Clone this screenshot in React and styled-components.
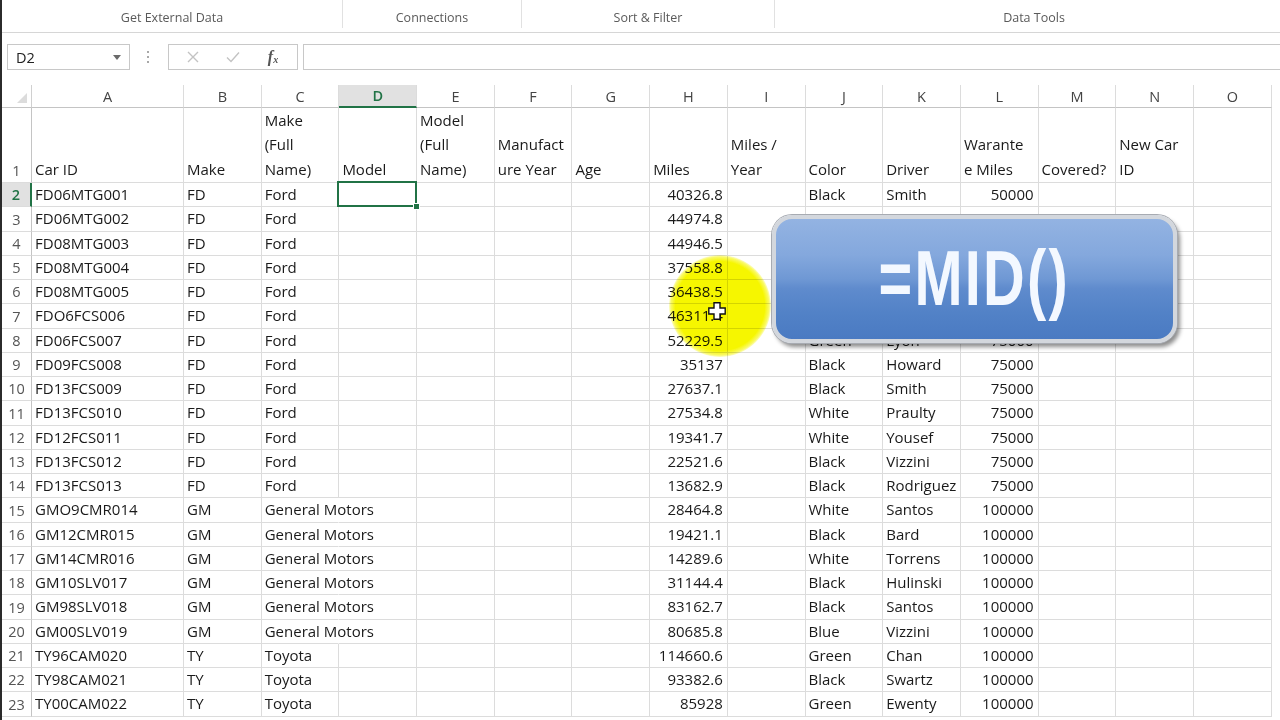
import React from 'react';
import styled, { createGlobalStyle } from 'styled-components';

const GlobalStyle = createGlobalStyle`
  html, body {
    margin: 0;
    padding: 0;
    background: #fff;
  }
  body {
    font-family: "Open Sans", "Liberation Sans", sans-serif;
    overflow: hidden;
  }
`;

const LETTERS = ['A', 'B', 'C', 'D', 'E', 'F', 'G', 'H', 'I', 'J', 'K', 'L', 'M', 'N', 'O'];

// header row: one entry per column, lines are wrapped like Excel wraps them
const TITLES = [
  ['Car ID'],
  ['Make'],
  ['Make', '(Full', 'Name)'],
  ['Model'],
  ['Model', '(Full', 'Name)'],
  ['Manufact', 'ure Year'],
  ['Age'],
  ['Miles'],
  ['Miles /', 'Year'],
  ['Color'],
  ['Driver'],
  ['Warante', 'e Miles'],
  ['Covered?'],
  ['New Car', 'ID'],
  []
];

// rows 3-7 of Color / Driver / Warantee sit under the callout, so they stay blank
const ROWS = [
  ['FD06MTG001', 'FD', 'Ford', '40326.8', 'Black', 'Smith', '50000'],
  ['FD06MTG002', 'FD', 'Ford', '44974.8', '', '', ''],
  ['FD08MTG003', 'FD', 'Ford', '44946.5', '', '', ''],
  ['FD08MTG004', 'FD', 'Ford', '37558.8', '', '', ''],
  ['FD08MTG005', 'FD', 'Ford', '36438.5', '', '', ''],
  ['FDO6FCS006', 'FD', 'Ford', '46311.4', '', '', ''],
  ['FD06FCS007', 'FD', 'Ford', '52229.5', 'Green', 'Lyon', '75000'],
  ['FD09FCS008', 'FD', 'Ford', '35137', 'Black', 'Howard', '75000'],
  ['FD13FCS009', 'FD', 'Ford', '27637.1', 'Black', 'Smith', '75000'],
  ['FD13FCS010', 'FD', 'Ford', '27534.8', 'White', 'Praulty', '75000'],
  ['FD12FCS011', 'FD', 'Ford', '19341.7', 'White', 'Yousef', '75000'],
  ['FD13FCS012', 'FD', 'Ford', '22521.6', 'Black', 'Vizzini', '75000'],
  ['FD13FCS013', 'FD', 'Ford', '13682.9', 'Black', 'Rodriguez', '75000'],
  ['GMO9CMR014', 'GM', 'General Motors', '28464.8', 'White', 'Santos', '100000'],
  ['GM12CMR015', 'GM', 'General Motors', '19421.1', 'Black', 'Bard', '100000'],
  ['GM14CMR016', 'GM', 'General Motors', '14289.6', 'White', 'Torrens', '100000'],
  ['GM10SLV017', 'GM', 'General Motors', '31144.4', 'Black', 'Hulinski', '100000'],
  ['GM98SLV018', 'GM', 'General Motors', '83162.7', 'Black', 'Santos', '100000'],
  ['GM00SLV019', 'GM', 'General Motors', '80685.8', 'Blue', 'Vizzini', '100000'],
  ['TY96CAM020', 'TY', 'Toyota', '114660.6', 'Green', 'Chan', '100000'],
  ['TY98CAM021', 'TY', 'Toyota', '93382.6', 'Black', 'Swartz', '100000'],
  ['TY00CAM022', 'TY', 'Toyota', '85928', 'Green', 'Ewenty', '100000']
];

const GROUPS = [
  { label: 'Get External Data', width: 341 },
  { label: 'Connections', width: 179 },
  { label: 'Sort & Filter', width: 253 },
  { label: 'Data Tools', width: 518, last: true }
];

// map a data row onto the 15 columns
const toCells = row => {
  const [id, make, full, miles, color, driver, warranty] = row;
  return [id, make, full, '', '', '', '', miles, '', color, driver, warranty, '', '', ''];
};

const NUMERIC = { 7: true, 11: true };

// long text in C runs on into the empty D column, like Excel does
const spills = (value, c) => c === 2 && value.length > 10;

function App() {
  return (
    <Window>
      <GlobalStyle />
      <Ribbon>
        {GROUPS.map(g => (
          <RibbonGroup key={g.label} $width={g.width} $last={g.last}>
            <GroupLabel>{g.label}</GroupLabel>
          </RibbonGroup>
        ))}
      </Ribbon>

      <FormulaBar>
        <NameBox>
          <span>D2</span>
          <Caret />
        </NameBox>
        <Grip>
          <i />
          <i />
          <i />
        </Grip>
        <FormulaButtons>
          <FxButton>
            <svg width="12" height="12" viewBox="0 0 12 12">
              <path d="M1 1 L11 11 M11 1 L1 11" stroke="#c3c3c3" strokeWidth="1.4" fill="none" />
            </svg>
          </FxButton>
          <FxButton>
            <svg width="14" height="12" viewBox="0 0 14 12">
              <path d="M1 6.5 L5 10.5 L13 1.5" stroke="#c3c3c3" strokeWidth="1.4" fill="none" />
            </svg>
          </FxButton>
          <FxButton>
            <FxLabel>
              f<sub>x</sub>
            </FxLabel>
          </FxButton>
        </FormulaButtons>
        <FormulaInput />
      </FormulaBar>

      <Sheet>
        <Corner />
        {LETTERS.map(l => (
          <ColHead key={l} $active={l === 'D'}>
            {l}
          </ColHead>
        ))}

        <RowNum>1</RowNum>
        {TITLES.map((lines, i) => (
          <TitleCell key={i}>
            {lines.map(line => (
              <span key={line}>{line}</span>
            ))}
          </TitleCell>
        ))}

        {ROWS.map((row, r) => (
          <React.Fragment key={row[0]}>
            <RowNum $active={r === 0}>{r + 2}</RowNum>
            {toCells(row).map((value, c) => (
              <Cell
                key={c}
                $right={NUMERIC[c]}
                $spill={spills(value, c)}
                $selected={r === 0 && c === 3}
              >
                {value}
              </Cell>
            ))}
          </React.Fragment>
        ))}
      </Sheet>

      <Highlight />
      <Pointer width="18" height="18" viewBox="0 0 18 18">
        <path
          d="M6 0.8 H12 V6 H17.2 V12 H12 V17.2 H6 V12 H0.8 V6 H6 Z"
          fill="#fff"
          stroke="#111"
          strokeWidth="1.4"
        />
      </Pointer>

      <Callout>
        <CalloutText>=MID()</CalloutText>
      </Callout>
    </Window>
  );
}

const Window = styled.div`
  position: relative;
  width: 1280px;
  height: 720px;
  overflow: hidden;
  box-sizing: border-box;
  border-left: 2px solid #2b2b2b;
  background: #fff;
`;

const Ribbon = styled.div`
  display: flex;
  height: 32px;
  border-bottom: 1px solid #d6d6d6;
  overflow: hidden;
`;

const RibbonGroup = styled.div`
  flex: 0 0 ${({ $width }) => $width}px;
  height: 28px;
  display: flex;
  align-items: flex-end;
  justify-content: center;
  border-right: ${({ $last }) => ($last ? 'none' : '1px solid #e1e1e1')};
  box-sizing: border-box;
`;

const GroupLabel = styled.span`
  font-size: 12.5px;
  line-height: 16px;
  padding-bottom: 2px;
  color: #5a5a5a;
  white-space: nowrap;
`;

const FormulaBar = styled.div`
  display: flex;
  align-items: center;
  padding: 11px 0 0 5px;
  height: 26px;
`;

const NameBox = styled.div`
  width: 123px;
  height: 26px;
  box-sizing: border-box;
  border: 1px solid #c8c8c8;
  display: flex;
  align-items: center;
  justify-content: space-between;
  padding: 0 8px;
  font-size: 14.5px;
  color: #222;
`;

const Caret = styled.span`
  width: 0;
  height: 0;
  border-left: 4px solid transparent;
  border-right: 4px solid transparent;
  border-top: 5px solid #6a6a6a;
`;

const Grip = styled.div`
  display: flex;
  flex-direction: column;
  gap: 3px;
  margin: 0 19px 0 17px;

  i {
    display: block;
    width: 2px;
    height: 2px;
    background: #a8a8a8;
  }
`;

const FormulaButtons = styled.div`
  width: 130px;
  height: 26px;
  box-sizing: border-box;
  border: 1px solid #c8c8c8;
  display: flex;
  align-items: center;
  justify-content: space-around;
  padding: 0 4px;
`;

const FxButton = styled.div`
  width: 28px;
  display: flex;
  align-items: center;
  justify-content: center;
`;

const FxLabel = styled.span`
  font-family: "Liberation Serif", serif;
  font-style: italic;
  font-weight: bold;
  font-size: 16px;
  color: #555;

  sub {
    font-size: 10px;
    vertical-align: -1px;
  }
`;

const FormulaInput = styled.div`
  flex: 1;
  height: 26px;
  margin-left: 5px;
  box-sizing: border-box;
  border: 1px solid #c8c8c8;
  border-right: none;
`;

const Sheet = styled.div`
  display: grid;
  grid-template-columns: 30px 152px repeat(14, 77.7px);
  grid-template-rows: 23px 75px repeat(22, 24.25px);
  margin-top: 15px;
  font-size: 15px;
  color: #1a1a1a;
`;

const Corner = styled.div`
  position: relative;
  border-right: 1px solid #d0d0d0;
  border-bottom: 1px solid #c4c4c4;

  &::after {
    content: '';
    position: absolute;
    right: 4px;
    bottom: 4px;
    border-left: 10px solid transparent;
    border-bottom: 10px solid #dcdcdc;
  }
`;

const ColHead = styled.div`
  display: flex;
  align-items: center;
  justify-content: center;
  font-size: 14.5px;
  color: ${({ $active }) => ($active ? '#217346' : '#444')};
  font-weight: ${({ $active }) => ($active ? 600 : 400)};
  background: ${({ $active }) => ($active ? '#e1e1e1' : '#fff')};
  border-right: 1px solid #dcdcdc;
  border-bottom: ${({ $active }) => ($active ? '2px solid #217346' : '1px solid #c4c4c4')};
  box-sizing: border-box;
`;

const RowNum = styled.div`
  display: flex;
  align-items: flex-end;
  justify-content: center;
  padding-bottom: 2px;
  font-size: 14.5px;
  color: ${({ $active }) => ($active ? '#217346' : '#555')};
  font-weight: ${({ $active }) => ($active ? 600 : 400)};
  background: ${({ $active }) => ($active ? '#e1e1e1' : '#fff')};
  border-right: ${({ $active }) => ($active ? '2px solid #217346' : '1px solid #c4c4c4')};
  border-bottom: 1px solid #dcdcdc;
  box-sizing: border-box;
`;

const TitleCell = styled.div`
  display: flex;
  flex-direction: column;
  justify-content: flex-end;
  padding: 0 3px 1px;
  line-height: 24.5px;
  white-space: nowrap;
  overflow: hidden;
  border-right: 1px solid #dcdcdc;
  border-bottom: 1px solid #dcdcdc;
  box-sizing: border-box;
`;

const Cell = styled.div`
  position: relative;
  display: flex;
  align-items: center;
  justify-content: ${({ $right }) => ($right ? 'flex-end' : 'flex-start')};
  padding: 0 ${({ $right }) => ($right ? '4px' : '3px')} 1px 3px;
  white-space: nowrap;
  overflow: ${({ $selected, $spill }) => ($selected || $spill ? 'visible' : 'hidden')};
  z-index: ${({ $selected, $spill }) => ($selected ? 2 : $spill ? 1 : 'auto')};
  border-right: 1px solid ${({ $spill }) => ($spill ? 'transparent' : '#dcdcdc')};
  border-bottom: 1px solid #dcdcdc;
  box-sizing: border-box;

  ${({ $selected }) =>
    $selected &&
    `
    &::before {
      content: '';
      position: absolute;
      top: -2px;
      left: -2px;
      right: -1px;
      bottom: -1px;
      border: 2px solid #217346;
    }
    &::after {
      content: '';
      position: absolute;
      right: -4px;
      bottom: -4px;
      width: 5px;
      height: 5px;
      background: #217346;
      border: 1px solid #fff;
    }
  `}
`;

const Highlight = styled.div`
  position: absolute;
  left: 667px;
  top: 255px;
  width: 102px;
  height: 102px;
  border-radius: 50%;
  background: radial-gradient(
    circle,
    #f6f600 0%,
    #f6f600 62%,
    rgba(246, 246, 0, 0.6) 68%,
    rgba(246, 246, 0, 0) 72%
  );
  mix-blend-mode: multiply;
  pointer-events: none;
`;

const Pointer = styled.svg`
  position: absolute;
  left: 706px;
  top: 302px;
`;

const Callout = styled.div`
  position: absolute;
  left: 770px;
  top: 215px;
  width: 405px;
  height: 128px;
  box-sizing: border-box;
  border: 4px solid #d3d7dd;
  border-radius: 20px;
  background: linear-gradient(
    180deg,
    #93b3e2 0%,
    #84a8dd 30%,
    #6f98d4 50%,
    #5f8bcd 58%,
    #5282c7 78%,
    #4a7ac2 100%
  );
  box-shadow: 0 0 0 1px #a7abb2, 3px 4px 4px rgba(0, 0, 0, 0.45);
  display: flex;
  align-items: center;
  justify-content: center;
`;

const CalloutText = styled.span`
  font-family: "Liberation Sans", sans-serif;
  font-weight: bold;
  font-size: 78px;
  line-height: 1;
  letter-spacing: 3px;
  color: #f3f8ff;
  transform: scaleX(0.74);
  margin-top: -2px;
`;

export default App;
